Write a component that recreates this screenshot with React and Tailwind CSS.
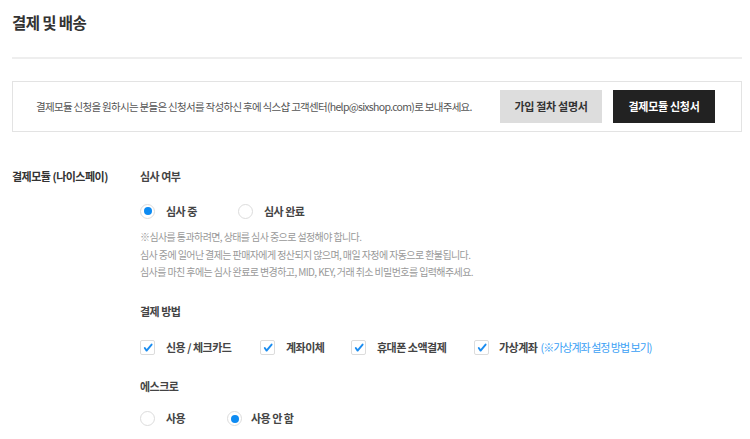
import React from "react";

const font = { fontFamily: '"Noto Sans CJK KR", "Noto Sans", sans-serif' };

function Radio({ checked }) {
  return (
    <span className="w-[15px] h-[15px] rounded-full border border-[#dcdcdc] bg-white flex items-center justify-center shrink-0">
      {checked && <span className="w-[8px] h-[8px] rounded-full bg-[#0d8bf2]" />}
    </span>
  );
}

function Check() {
  return (
    <span className="w-[15px] h-[15px] border border-[#dcdcdc] rounded-[2px] bg-white flex items-center justify-center shrink-0">
      <svg width="10" height="9" viewBox="0 0 10 9">
        <path d="M1.8 5 L3.6 7.6 L8.6 1.6" fill="none" stroke="#1a8cf0" strokeWidth="1.9" strokeLinecap="round" strokeLinejoin="round" />
      </svg>
    </span>
  );
}

export default function App() {
  return (
    <div style={font} className="w-[750px] h-[439px] bg-white overflow-hidden pl-[12px] pr-[8px] text-[#333] tracking-[-0.5px]">
      <div className="pt-[10px] h-[59px] border-b-2 border-[#eeeeee]">
        <h1 className="text-[15.5px] font-bold leading-[24px] text-[#333] tracking-[-0.6px]">결제 및 배송</h1>
      </div>
      <div className="mt-[22px] h-[51px] border border-[#e3e3e3] flex items-center pl-[23px] pr-[26px]">
        <p className="text-[10.5px] text-[#555] flex-1 whitespace-nowrap tracking-[-0.7px]">
          결제모듈 신청을 원하시는 분들은 신청서를 작성하신 후에 식스샵 고객센터(help@sixshop.com)로 보내주세요.
        </p>
        <button className="w-[102px] h-[33px] bg-[#dddddd] text-[11px] font-bold text-[#333] tracking-[-0.3px]">가입 절차 설명서</button>
        <button className="w-[102px] h-[33px] bg-[#222222] text-[11px] font-bold text-white ml-[11px] tracking-[-0.3px]">결제모듈 신청서</button>
      </div>
      <div className="flex mt-[35px]">
        <div className="w-[128px] text-[11px] font-bold text-[#333] leading-[18px]">결제모듈 (나이스페이)</div>
        <div className="flex-1">
          <div className="text-[11px] font-bold text-[#444] leading-[18px]">심사 여부</div>
          <div className="flex items-center mt-[18px] h-[16px] text-[11px] font-bold text-[#444]">
            <Radio checked />
            <span className="ml-[11px] w-[72px]">심사 중</span>
            <Radio />
            <span className="ml-[11px]">심사 완료</span>
          </div>
          <div className="mt-[9px] text-[10px] text-[#999] leading-[17.5px] tracking-[-0.6px]">
            <p>※심사를 통과하려면, 상태를 심사 중으로 설정해야 합니다.</p>
            <p>심사 중에 일어난 결제는 판매자에게 정산되지 않으며, 매일 자정에 자동으로 환불됩니다.</p>
            <p>심사를 마친 후에는 심사 완료로 변경하고, MID, KEY, 거래 취소 비밀번호를 입력해주세요.</p>
          </div>
          <div className="mt-[21px] text-[11px] font-bold text-[#444] leading-[18px]">결제 방법</div>
          <div className="flex items-center mt-[20px] h-[16px] text-[11px] font-bold text-[#444]">
            <Check />
            <span className="ml-[11px] w-[94px]">신용 / 체크카드</span>
            <Check />
            <span className="ml-[11px] w-[65px]">계좌이체</span>
            <Check />
            <span className="ml-[11px] w-[97px]">휴대폰 소액결제</span>
            <Check />
            <span className="ml-[10px]">가상계좌</span>
            <span className="ml-[3px] text-[#3aa0f5] font-normal tracking-[-1px]">(※가상계좌 설정 방법 보기)</span>
          </div>
          <div className="mt-[21px] text-[11px] font-bold text-[#444] leading-[18px]">에스크로</div>
          <div className="flex items-center mt-[16px] h-[16px] text-[11px] font-bold text-[#444]">
            <Radio />
            <span className="ml-[11px] w-[61px]">사용</span>
            <Radio checked />
            <span className="ml-[9px]">사용 안 함</span>
          </div>
        </div>
      </div>
    </div>
  );
}
